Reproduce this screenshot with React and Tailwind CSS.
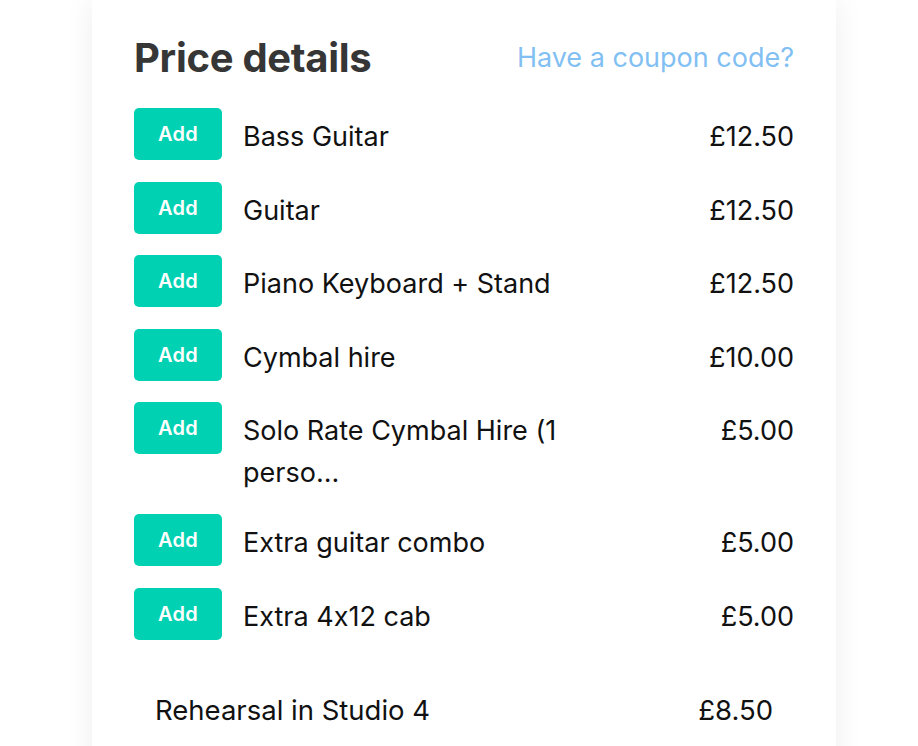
import React from "react";

const items = [
  { name: "Bass Guitar", price: "£12.50" },
  { name: "Guitar", price: "£12.50" },
  { name: "Piano Keyboard + Stand", price: "£12.50" },
  { name: "Cymbal hire", price: "£10.00" },
  { name: "Solo Rate Cymbal Hire (1 perso...", price: "£5.00" },
  { name: "Extra guitar combo", price: "£5.00" },
  { name: "Extra 4x12 cab", price: "£5.00" },
];

export default function App() {
  return (
    <div
      className="w-[918px] h-[746px] overflow-hidden bg-white [font-feature-settings:'calt'_0]"
      style={{ fontFamily: "Inter, 'Noto Sans', sans-serif" }}
    >
      <div className="ml-[92px] w-[744px] min-h-[800px] bg-white shadow-[0_0_28px_rgba(10,10,10,0.07)] px-[42px] pt-[34px]">
        <div className="flex items-start justify-between">
          <h1 className="text-[40px] leading-[47px] font-bold text-[#363636] tracking-[-0.3px]">
            Price details
          </h1>
          <a className="mt-[3px] text-[27px] leading-[42px] text-[#82bff2]">Have a coupon code?</a>
        </div>
        <div className="mt-[27px] flex flex-col gap-[18.5px]">
          {items.map((it) => (
            <div key={it.name} className="flex items-start">
              <button className="w-[88px] h-[52px] mb-[3px] shrink-0 rounded-[5px] bg-[#00d1b2] text-white text-[20px] font-semibold tracking-[0.3px]">
                Add
              </button>
              <div className="ml-[21px] w-[360px] pt-[8px] pb-[1.5px] text-[27px] leading-[42px] text-[#111111]">
                {it.name}
              </div>
              <div className="flex-1 pt-[8px] text-right text-[27px] leading-[42px] text-[#111111]">
                {it.price}
              </div>
            </div>
          ))}
        </div>
        <div className="mt-[49px] px-[21px] flex justify-between text-[27.5px] leading-[37px] text-[#111111]">
          <span>Rehearsal in Studio 4</span>
          <span>£8.50</span>
        </div>
      </div>
    </div>
  );
}
